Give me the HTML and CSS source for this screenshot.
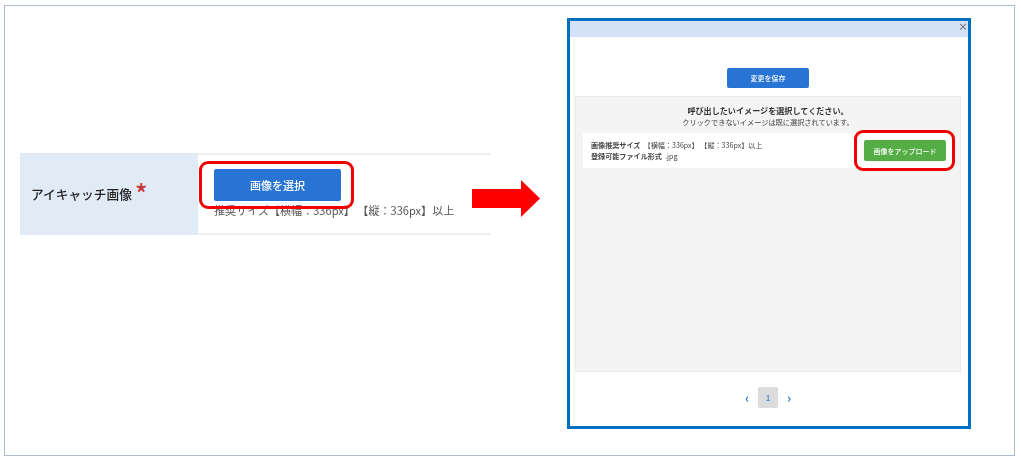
FILE: index.html
```html
<!DOCTYPE html>
<html lang="ja">
<head>
    <meta charset="UTF-8">
    <meta name="viewport" content="width=device-width, initial-scale=1.0">
    <title>アイキャッチ画像</title>
    <link rel="stylesheet" href="styles.css">
</head>
<body>
<div class="frame">
    <div class="form-row">
        <div class="form-label">
            <span class="label-text">アイキャッチ画像</span>
            <span class="required">*</span>
        </div>
        <div class="form-field">
            <div class="select-wrap">
                <button class="button button-select">画像を選択</button>
                <div class="highlight highlight-select"></div>
            </div>
            <div class="form-note">推奨サイズ【横幅：336px】 【縦：336px】以上</div>
        </div>
    </div>

    <svg class="arrow" width="68" height="37" viewBox="0 0 68 37">
        <polygon points="0,9 49,9 49,0 68,18.5 49,37 49,28 0,28" fill="#ff0000"></polygon>
    </svg>

    <div class="modal">
        <div class="modal-header">
            <span class="modal-close">×</span>
        </div>
        <div class="modal-save">
            <button class="button button-save">変更を保存</button>
        </div>
        <div class="modal-panel">
            <div class="panel-title">呼び出したいイメージを選択してください。</div>
            <div class="panel-sub">クリックできないイメージは既に選択されています。</div>
            <div class="upload-row">
                <div class="upload-info">
                    <div><b>画像推奨サイズ</b>&nbsp;&nbsp;【横幅：336px】 【縦：336px】以上</div>
                    <div><b>登録可能ファイル形式</b>&nbsp;&nbsp;.jpg</div>
                </div>
                <div class="upload-wrap">
                    <button class="button button-upload">画像をアップロード</button>
                    <div class="highlight highlight-upload"></div>
                </div>
            </div>
        </div>
        <div class="pager">
            <span class="pager-arrow">‹</span>
            <span class="pager-current">1</span>
            <span class="pager-arrow">›</span>
        </div>
    </div>
</div>
</body>
</html>
```

FILE: styles.css
```css
* {
    margin: 0;
    padding: 0;
    box-sizing: border-box;
    font-family: 'Noto Sans CJK JP', 'Noto Sans', sans-serif;
}

body {
    background-color: #fff;
    padding: 5px 6px 7px 4px;
    height: 463px;
    overflow: hidden;
}

.frame {
    display: flex;
    align-items: flex-start;
    height: 451px;
    border: 1px solid #b0bccb;
}

.label-text,
.form-note,
.button,
.panel-title,
.panel-sub,
.upload-info,
.pager,
.modal-close {
    filter: blur(0.35px);
}

/* left: form row */
.form-row {
    display: flex;
    width: 471px;
    height: 82px;
    margin: 147px 0 0 15px;
    border-top: 2px solid #eee;
    border-bottom: 2px solid #eee;
    flex-shrink: 0;
}

.form-label {
    width: 178px;
    margin: -2px 0;
    padding: 31px 0 0 11px;
    background-color: #e1ebf5;
    font-size: 12.7px;
    font-weight: 500;
    color: #222;
    display: flex;
    align-items: flex-start;
}

.required {
    color: #c83a3a;
    font-size: 26px;
    line-height: 26px;
    margin: -4px 0 0 3px;
}

.form-field {
    padding: 14px 0 0 16px;
}

.select-wrap {
    position: relative;
    width: 127px;
}

.form-note {
    font-size: 11.07px;
    line-height: 16px;
    color: #555;
    white-space: nowrap;
    margin-top: 1px;
}

.button {
    display: block;
    border: none;
    border-radius: 2px;
    color: #fff;
    font-weight: 500;
}

.button-select {
    width: 127px;
    height: 32px;
    background-color: #2874d4;
    font-size: 11px;
}

.highlight {
    position: absolute;
    z-index: 1;
    border: 3px solid #f00000;
    border-radius: 9px;
}

.highlight-select {
    left: -15px;
    top: -8px;
    width: 155px;
    height: 48px;
}

.arrow {
    margin: 174px 0 0 -19px;
    flex-shrink: 0;
}

/* right: modal */
.modal {
    width: 404px;
    height: 411px;
    margin: 12px 0 0 27px;
    border: 3px solid #0070c0;
    flex-shrink: 0;
}

.modal-header {
    height: 16px;
    background-color: #d3e2f7;
    text-align: right;
}

.modal-close {
    display: block;
    font-size: 10px;
    line-height: 11px;
    font-weight: 700;
    color: #777;
}

.modal-save {
    display: flex;
    justify-content: center;
    padding: 31px 2px 0 0;
    height: 59px;
}

.button-save {
    width: 82px;
    height: 20px;
    background-color: #2874d4;
    font-size: 7px;
}

.modal-panel {
    height: 276px;
    margin: 0 7px 0 5px;
    padding-top: 8px;
    background-color: #f4f4f4;
    border: 1px solid #eaeaea;
}

.panel-title {
    font-size: 8.1px;
    line-height: 12px;
    font-weight: 700;
    color: #333;
    text-align: center;
}

.panel-sub {
    font-size: 7.2px;
    line-height: 10px;
    color: #444;
    text-align: center;
}

.upload-row {
    display: flex;
    align-items: center;
    justify-content: space-between;
    height: 35px;
    margin: 6px 8px 0 7px;
    padding: 0 6px 0 8px;
    background-color: #fff;
}

.upload-info {
    font-size: 7.1px;
    line-height: 11px;
    color: #444;
}

.upload-wrap {
    position: relative;
}

.button-upload {
    width: 82px;
    height: 21px;
    background-color: #54ad45;
    font-size: 7px;
}

.highlight-upload {
    left: -10px;
    top: -10px;
    width: 101px;
    height: 41px;
}

.pager {
    display: flex;
    justify-content: center;
    align-items: center;
    gap: 8px;
    margin-top: 15px;
    padding-right: 2px;
}

.pager-arrow {
    font-size: 13px;
    font-weight: 700;
    color: #3f7fd0;
    width: 6px;
    text-align: center;
}

.pager-current {
    width: 20px;
    height: 21px;
    background-color: #dcdcdc;
    border-radius: 2px;
    color: #5b93d8;
    font-size: 8px;
    font-weight: 700;
    text-align: center;
    line-height: 21px;
}
```
